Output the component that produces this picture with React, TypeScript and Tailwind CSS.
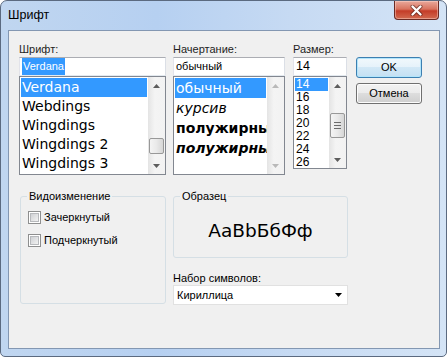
import React from "react";

// Win7 "Шрифт" (font) dialog

const fonts = ["Verdana", "Webdings", "Wingdings", "Wingdings 2", "Wingdings 3"];
const sizes = ["14", "16", "18", "20", "22", "24", "26"];

function Arrow({ up, light }: { up?: boolean; light?: boolean }) {
  return (
    <svg width="7" height="4" viewBox="0 0 7 4">
      <path d={up ? "M0 4 L3.5 0 L7 4Z" : "M0 0 L7 0 L3.5 4Z"} fill={light ? "#b9b9b9" : "#5d5d5d"} />
    </svg>
  );
}

function ScrollBar({ thumb, grip, light }: { thumb?: string; grip?: boolean; light?: boolean }) {
  return (
    <div className="flex w-[17px] shrink-0 flex-col bg-[linear-gradient(to_right,#e4e4e4,#f4f4f4_40%,#f2f2f2)]">
      <div className="flex h-[17px] items-center justify-center">
        <Arrow up light={light} />
      </div>
      <div className="flex-1">
        {thumb && (
          <div
            className={
              "mx-[1px] flex flex-col items-center justify-center gap-[2px] rounded-[2px] border border-[#989898] bg-[linear-gradient(to_right,#f4f4f4,#e9e9e9_50%,#d6d6d6)] " +
              thumb
            }
          >
            {grip && (
              <>
                <div className="h-[1px] w-[7px] bg-[#6c6c6c]" />
                <div className="h-[1px] w-[7px] bg-[#6c6c6c]" />
                <div className="h-[1px] w-[7px] bg-[#6c6c6c]" />
              </>
            )}
          </div>
        )}
      </div>
      <div className="flex h-[17px] items-center justify-center">
        <Arrow light={light} />
      </div>
    </div>
  );
}

function TextBox({ children, w }: { children: React.ReactNode; w: string }) {
  return (
    <div
      className={
        "flex h-[19px] items-center border border-[#abadb3] border-b-[#e3e9ef] border-l-[#e2e3ea] border-r-[#dbdfe6] bg-white pl-[2px] text-[11px] " +
        w
      }
    >
      {children}
    </div>
  );
}

function Label({ children }: { children: React.ReactNode }) {
  return <div className="h-[16px] text-[11px] leading-[16px] text-[#1e1e1e]">{children}</div>;
}

function Button({ children, def }: { children: React.ReactNode; def?: boolean }) {
  return (
    <div
      className={
        "flex h-[21px] w-[66px] items-center justify-center rounded-[3px] border text-[11px] " +
        (def
          ? "border-[#3c7fb1] bg-[linear-gradient(to_bottom,#f1f8fc,#e5f2fa_50%,#d2e8f6_50%,#c4e0f3)] shadow-[inset_0_0_0_1px_#b2e5fb]"
          : "border-[#707070] bg-[linear-gradient(to_bottom,#f2f2f2,#ebebeb_50%,#dddddd_50%,#cfcfcf)] shadow-[inset_0_0_0_1px_#fcfcfc]")
      }
    >
      {children}
    </div>
  );
}

function CheckBox({ label }: { label: string }) {
  return (
    <div className="flex h-[13px] items-center gap-[3px]">
      <div className="h-[13px] w-[13px] border border-[#8e8f8f] bg-white p-[1px]">
        <div className="h-full w-full border border-[#b7b9bc] bg-[linear-gradient(135deg,#cfd1d4,#f2f2f2)]" />
      </div>
      <span className="text-[11px]">{label}</span>
    </div>
  );
}

export default function App() {
  return (
    <div className="h-[357px] w-[447px] bg-white font-['Liberation_Sans',Arial,sans-serif] text-black">
      <div className="flex h-full w-full flex-col rounded-t-[7px] rounded-b-[5px] border border-[#5b6a80] bg-[linear-gradient(to_right,#c0d6f0,#b6d0f1_35%,#c6daf3_65%,#d4e4f6)]">
        {/* title bar */}
        <div className="flex h-[29px] shrink-0 items-start justify-between">
          <div className="pl-[7px] pt-[6px] text-[12.5px] leading-[16px]">Шрифт</div>
          <div className="mr-[7px] flex h-[19px] w-[45px] items-center justify-center rounded-b-[4px] border border-t-0 border-[#6a2a24] bg-[linear-gradient(to_bottom,#e9a99c,#d8735f_45%,#c43c28_55%,#d26a50)] shadow-[inset_0_0_0_1px_rgba(255,220,210,0.45)]">
            <svg width="13" height="11" viewBox="0 0 13 11">
              <path d="M2.5 1.5 L10.5 9.5 M10.5 1.5 L2.5 9.5" stroke="#4a1c16" strokeWidth="4" strokeLinecap="round" opacity="0.6" />
              <path d="M2.5 1.5 L10.5 9.5 M10.5 1.5 L2.5 9.5" stroke="#ffffff" strokeWidth="2.3" strokeLinecap="round" />
            </svg>
          </div>
        </div>

        {/* client */}
        <div className="mb-[7px] ml-[7px] mr-[6px] flex-1 border border-[#8397b2] bg-[#f0f0f0]">
          <div className="flex pl-[10px] pt-[10px]">
            {/* font */}
            <div className="flex w-[147px] flex-col">
              <Label>Шрифт:</Label>
              <TextBox w="w-[147px]">
                <span className="bg-[#3399ff] px-[1px] text-white">Verdana</span>
              </TextBox>
              <div className="flex h-[99px] border border-[#828790] bg-white">
                <div className="flex-1 overflow-hidden p-[1px] font-['DejaVu_Sans',Verdana,sans-serif] text-[14px]">
                  {fonts.map((f, i) => (
                    <div
                      key={f}
                      className={"h-[19px] whitespace-nowrap pl-[1px] leading-[19px] " + (i === 0 ? "bg-[#3399ff] text-white" : "")}
                    >
                      {f}
                    </div>
                  ))}
                </div>
                <ScrollBar thumb="mt-[44px] h-[16px]" />
              </div>
            </div>

            {/* style */}
            <div className="ml-[7px] flex w-[112px] flex-col">
              <Label>Начертание:</Label>
              <TextBox w="w-[112px]">обычный</TextBox>
              <div className="flex h-[99px] border border-[#828790] bg-white">
                <div className="flex-1 overflow-hidden p-[1px] font-['DejaVu_Sans',Verdana,sans-serif] text-[14px]">
                  <div className="h-[20px] whitespace-nowrap bg-[#3399ff] pl-[1px] leading-[20px] text-white">обычный</div>
                  <div className="h-[20px] whitespace-nowrap pl-[1px] italic leading-[20px]">курсив</div>
                  <div className="h-[20px] whitespace-nowrap pl-[1px] font-bold leading-[20px]">полужирный</div>
                  <div className="h-[20px] whitespace-nowrap pl-[1px] font-bold italic leading-[20px]">полужирный курсив</div>
                </div>
                <ScrollBar light />
              </div>
            </div>

            {/* size */}
            <div className="ml-[8px] flex w-[54px] flex-col">
              <Label>Размер:</Label>
              <TextBox w="w-[54px]">
                <span className="text-[12.5px]">14</span>
              </TextBox>
              <div className="flex h-[93px] border border-[#828790] bg-white">
                <div className="flex-1 overflow-hidden p-[1px] text-[12px]">
                  {sizes.map((s, i) => (
                    <div key={s} className={"h-[13px] pl-[1px] leading-[13px] " + (i === 0 ? "bg-[#3399ff] text-white" : "")}>
                      {s}
                    </div>
                  ))}
                </div>
                <ScrollBar thumb="mt-[19px] h-[25px]" grip />
              </div>
            </div>

            {/* buttons */}
            <div className="ml-[9px] flex flex-col gap-[5px] pt-[16px]">
              <Button def>OK</Button>
              <Button>Отмена</Button>
            </div>
          </div>

          <div className="mt-[14px] flex pl-[11px]">
            <fieldset className="h-[115px] w-[146px] rounded-[3px] border border-[#d5dfe5] pl-[7px]">
              <legend className="ml-[-1px] px-[2px] text-[11px] leading-[14px]">Видоизменение</legend>
              <div className="mt-[8px] flex flex-col gap-[10px]">
                <CheckBox label="Зачеркнутый" />
                <CheckBox label="Подчеркнутый" />
              </div>
            </fieldset>

            <div className="ml-[7px] flex w-[175px] flex-col">
              <fieldset className="h-[69px] rounded-[3px] border border-[#d5dfe5]">
                <legend className="ml-[6px] px-[2px] text-[11px] leading-[14px]">Образец</legend>
                <div className="flex h-[53px] items-center justify-center pt-[3px] font-['DejaVu_Sans',Verdana,sans-serif] text-[18.5px]">
                  AaBbБбФф
                </div>
              </fieldset>
              <div className="mt-[13px] h-[14px] text-[11px] leading-[14px]">Набор символов:</div>
              <div className="flex h-[20px] items-center justify-between border border-[#e1e1e1] bg-white pl-[3px] pr-[5px] text-[11px]">
                <span>Кириллица</span>
                <svg width="7" height="4" viewBox="0 0 7 4">
                  <path d="M0 0 L7 0 L3.5 4Z" fill="#000" />
                </svg>
              </div>
            </div>
          </div>
        </div>
      </div>
    </div>
  );
}
